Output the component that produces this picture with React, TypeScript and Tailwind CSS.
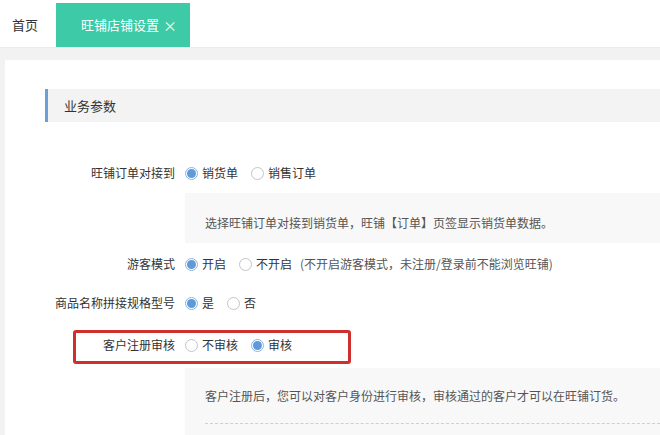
import React from 'react'

const font = { fontFamily: '"Noto Sans CJK SC", "Noto Sans", sans-serif' }

const Radio = ({ checked, label }: { checked?: boolean; label: string }) => (
    <label className="flex items-center gap-[4px]">
        {checked ? (
            <span className="flex h-[13px] w-[13px] items-center justify-center rounded-full border border-[#8db4e4] bg-white">
                <span className="h-[9px] w-[9px] rounded-full bg-[#5e9ad8]"></span>
            </span>
        ) : (
            <span className="h-[13px] w-[13px] rounded-full border border-[#c4c4c4] bg-white"></span>
        )}
        <span>{label}</span>
    </label>
)

const Row = ({ label, children, className = '' }: { label: string; children: React.ReactNode; className?: string }) => (
    <div className={`relative flex h-[24px] items-center text-[12px] text-[#333] ${className}`}>
        <div className="w-[170px] text-right">{label}</div>
        <div className="ml-[10px] flex items-center gap-[13px]">{children}</div>
    </div>
)

export default function App() {
    return (
        <div style={font} className="h-[435px] w-[660px] overflow-hidden bg-[#f2f2f2]">
            {/* tab bar */}
            <div className="flex h-[48px] items-end border-b border-[#ececec] bg-white pl-[12px]">
                <div className="flex h-[44px] items-center text-[13px] text-[#333]">首页</div>
                <div className="ml-[18px] flex h-[44px] w-[134px] items-center bg-[#3ccaa7] pl-[25px] text-[13px] text-white">
                    旺铺店铺设置 <span className="ml-[4px] text-[14px] text-[#e8fbf5]">×</span>
                </div>
            </div>

            {/* content panel */}
            <div className="ml-[5px] mt-[12px] h-[400px] bg-white pt-[29px]">
                <div className="ml-[40px] flex h-[33px] items-center border-l-[3px] border-[#6a9fd8] bg-[#f3f3f3] pl-[16px] text-[13px] text-[#333]">
                    业务参数
                </div>

                <Row label="旺铺订单对接到" className="mt-[39px]">
                    <Radio checked label="销货单" />
                    <Radio label="销售订单" />
                </Row>

                <div className="ml-[180px] mt-[8px] h-[50px] bg-[#f8f8f8] pl-[20px] pt-[21px] text-[12px] leading-[18px] text-[#555]">
                    选择旺铺订单对接到销货单，旺铺【订单】页签显示销货单数据。
                </div>

                <Row label="游客模式" className="mt-[9px]">
                    <Radio checked label="开启" />
                    <div className="flex items-center gap-[8px]">
                        <Radio label="不开启" />
                        <span className="text-[#555]">(不开启游客模式，未注册/登录前不能浏览旺铺)</span>
                    </div>
                </Row>

                <Row label="商品名称拼接规格型号" className="mt-[15px]">
                    <Radio checked label="是" />
                    <Radio label="否" />
                </Row>

                <Row label="客户注册审核" className="mt-[18px]">
                    <Radio label="不审核" />
                    <Radio checked label="审核" />
                    <div className="absolute left-[68px] top-[-3px] h-[34px] w-[278px] rounded-[3px] border-[3px] border-[#cf2f2f]"></div>
                </Row>

                <div className="ml-[180px] mt-[11px] h-[80px] bg-[#f8f8f8] pl-[20px] pt-[19px] text-[12px] leading-[18px] text-[#555]">
                    客户注册后，您可以对客户身份进行审核，审核通过的客户才可以在旺铺订货。
                    <div className="mt-[18px] border-t border-dashed border-[#cfcfcf]"></div>
                </div>
            </div>
        </div>
    )
}
